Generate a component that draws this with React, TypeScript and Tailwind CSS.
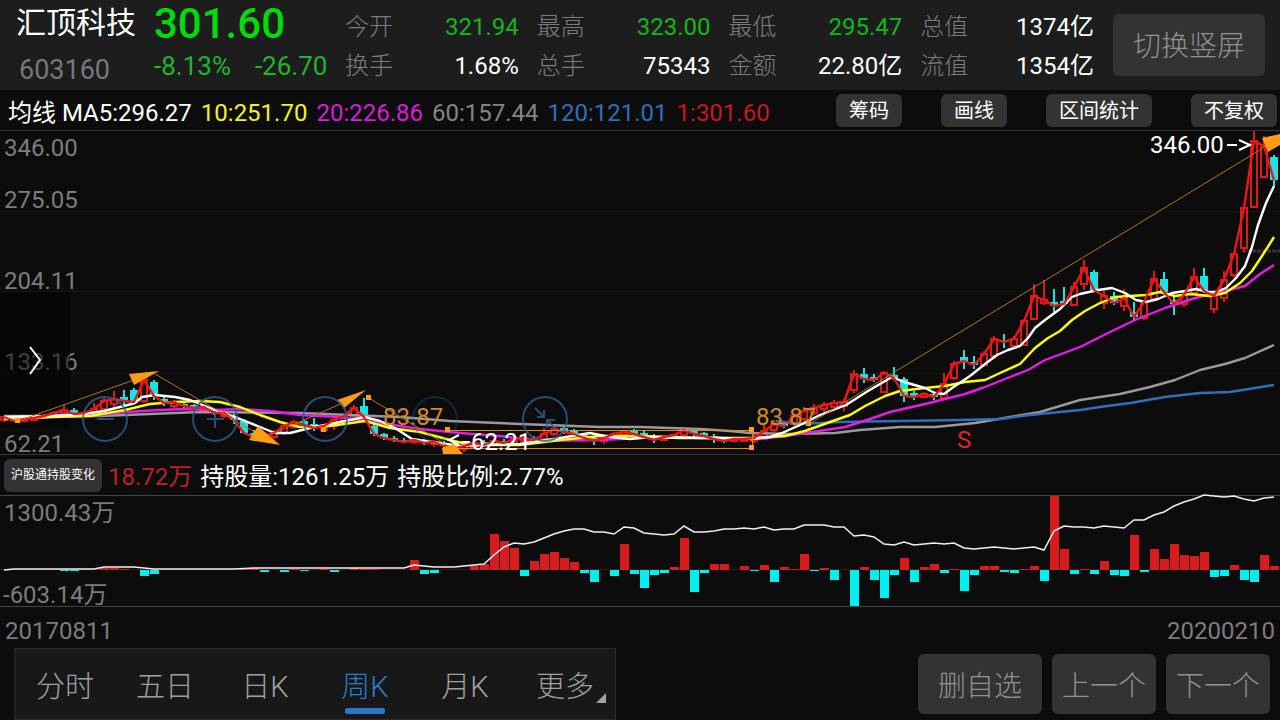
import clsx from 'clsx';

// [high, body top, body bottom, low, direction] for each week, in chart units
type Candle = [number, number, number, number, 'u' | 'd'];

const candles: Candle[] = [
  [416, 417, 420, 422, 'u'], [416, 418, 421, 422, 'd'], [417, 419, 421, 422, 'u'], [416, 418, 420, 421, 'u'],
  [414, 416, 418, 419, 'u'], [411, 413, 416, 417, 'u'], [405, 410, 413, 414, 'u'], [408, 410, 414, 416, 'd'],
  [411, 413, 415, 416, 'u'], [403, 409, 413, 414, 'u'], [398, 401, 409, 411, 'u'], [391, 399, 404, 408, 'u'],
  [390, 397, 401, 406, 'd'], [388, 390, 402, 404, 'd'], [373, 380, 401, 403, 'u'], [380, 382, 396, 400, 'd'],
  [396, 399, 403, 406, 'd'], [400, 402, 406, 408, 'u'], [402, 404, 406, 408, 'd'], [404, 405, 408, 410, 'd'],
  [405, 407, 411, 413, 'u'], [408, 410, 413, 415, 'd'], [411, 413, 416, 418, 'u'], [414, 416, 420, 424, 'd'],
  [419, 421, 433, 434, 'd'], [430, 433, 437, 441, 'd'], [434, 436, 439, 441, 'u'], [430, 433, 437, 439, 'u'],
  [423, 426, 433, 435, 'u'], [420, 422, 427, 429, 'u'], [419, 421, 425, 427, 'd'], [418, 424, 428, 431, 'd'],
  [424, 426, 430, 432, 'u'], [417, 420, 426, 430, 'u'], [414, 416, 421, 423, 'u'], [405, 408, 416, 418, 'u'],
  [398, 406, 417, 420, 'd'], [424, 426, 434, 436, 'd'], [433, 434, 438, 440, 'd'], [436, 438, 440, 442, 'd'],
  [438, 440, 442, 443, 'd'], [438, 440, 442, 444, 'u'], [439, 440, 443, 445, 'd'], [440, 442, 444, 447, 'u'],
  [441, 443, 446, 449, 'd'], [443, 446, 449, 451, 'd'], [443, 446, 449, 452, 'u'], [441, 443, 447, 449, 'u'],
  [440, 442, 445, 447, 'd'], [438, 441, 445, 446, 'u'], [439, 441, 443, 445, 'd'], [438, 439, 442, 444, 'u'],
  [437, 438, 441, 443, 'u'], [436, 438, 440, 441, 'd'], [428, 434, 439, 441, 'u'], [426, 429, 434, 436, 'u'],
  [426, 428, 432, 434, 'd'], [429, 431, 434, 436, 'd'], [433, 435, 438, 441, 'd'], [436, 438, 441, 445, 'd'],
  [436, 438, 441, 444, 'u'], [432, 434, 438, 440, 'u'], [430, 432, 435, 437, 'u'], [429, 431, 434, 436, 'd'],
  [431, 433, 437, 439, 'd'], [434, 436, 440, 443, 'd'], [436, 437, 440, 441, 'u'], [434, 435, 437, 439, 'u'],
  [428, 430, 435, 437, 'u'], [429, 431, 434, 438, 'd'], [432, 433, 436, 439, 'd'], [434, 436, 439, 443, 'd'],
  [437, 439, 441, 443, 'd'], [438, 439, 441, 442, 'u'], [437, 439, 441, 442, 'u'], [432, 438, 441, 443, 'u'],
  [425, 431, 439, 440, 'u'], [420, 424, 430, 432, 'u'], [421, 423, 426, 428, 'd'], [413, 416, 424, 426, 'u'],
  [407, 411, 419, 421, 'u'], [404, 408, 413, 415, 'u'], [402, 405, 409, 412, 'u'], [400, 403, 407, 409, 'u'],
  [399, 402, 406, 411, 'u'], [370, 374, 390, 393, 'u'], [368, 374, 379, 383, 'd'], [374, 377, 380, 382, 'd'],
  [371, 373, 392, 393, 'u'], [367, 375, 378, 380, 'd'], [377, 379, 396, 402, 'd'], [391, 393, 397, 400, 'd'],
  [392, 394, 397, 398, 'u'], [392, 394, 397, 400, 'd'], [373, 384, 398, 399, 'u'], [361, 364, 378, 380, 'u'],
  [350, 357, 361, 369, 'd'], [356, 362, 365, 369, 'd'], [351, 354, 365, 367, 'u'], [336, 339, 356, 359, 'u'],
  [334, 340, 342, 348, 'd'], [336, 339, 346, 348, 'u'], [319, 321, 345, 346, 'u'], [284, 296, 319, 320, 'u'],
  [280, 300, 303, 305, 'u'], [289, 302, 306, 313, 'd'], [287, 301, 304, 306, 'd'], [282, 287, 305, 306, 'u'],
  [260, 268, 284, 290, 'u'], [270, 272, 290, 292, 'd'], [291, 296, 303, 309, 'u'], [292, 296, 303, 305, 'd'],
  [289, 298, 306, 311, 'u'], [302, 312, 317, 320, 'd'], [300, 302, 318, 320, 'u'], [271, 279, 299, 301, 'u'],
  [272, 279, 292, 294, 'd'], [296, 300, 304, 315, 'd'], [291, 295, 304, 307, 'u'], [268, 277, 293, 295, 'u'],
  [268, 276, 291, 293, 'd'], [292, 296, 309, 313, 'u'], [271, 280, 298, 302, 'u'], [252, 254, 275, 278, 'u'],
  [207, 208, 248, 252, 'u'], [131, 141, 207, 208, 'u'], [136, 146, 177, 178, 'u'], [155, 157, 180, 187, 'd'],
];

const closes = candles.map((c, i) => `${i * 10 + 4},${c[4] === 'u' ? c[1] : c[2]}`).join(' ');

const averages = [
  {
    color: '#9a9a9a',
    points: '4,416 100,416 200,412 300,413 400,417 450,421 520,424 600,427 640,427 700,429 730,431 750,433 790,434 835,433 860,430 900,427 935,427 975,423 1010,417 1040,412 1080,400 1120,394 1150,387 1175,380 1200,370 1225,364 1245,358 1274,345',
  },
  {
    color: '#2f6fbf',
    points: '776,421 800,424 840,422 900,421 960,420 1000,419 1030,415 1080,410 1100,407 1130,403 1165,397 1200,393 1230,392 1274,385',
  },
  {
    color: '#e81ae8',
    points: '4,418 60,417 100,415 125,412 160,410 185,409 215,410 240,409 270,411 300,415 340,417 380,423 420,429 460,433 500,436 540,441 600,440 660,437 720,438 760,439 785,436 812,432 845,427 870,419 890,412 925,404 965,394 985,387 1010,377 1028,370 1045,360 1080,347 1110,332 1135,320 1165,308 1195,298 1225,291 1245,286 1260,274 1274,265',
  },
  {
    color: '#ffff00',
    points: '4,419 50,417 90,416 125,410 150,404 175,402 200,401 220,402 240,407 260,415 280,422 300,427 330,426 365,421 390,428 420,432 450,440 470,445 520,445 560,440 600,436 640,436 700,438 750,438 785,436 805,431 830,422 850,415 865,406 885,396 900,391 925,388 945,386 965,382 985,380 1000,373 1020,364 1035,348 1048,338 1060,331 1072,320 1085,311 1100,303 1115,297 1130,296 1146,295 1160,292 1175,296 1190,294 1210,296 1225,293 1240,283 1252,271 1262,256 1274,237',
  },
  {
    color: '#ffffff',
    points: '4,417 50,416 84,414 104,411 124,406 135,403 142,397 155,395 175,397 190,400 205,406 220,412 240,419 260,427 275,433 290,433 310,428 330,424 355,419 364,417 380,421 395,428 412,439 425,441 440,443 460,446 480,445 520,444 560,438 590,433 610,437 630,439 650,437 680,438 720,438 752,439 770,437 782,433 800,425 820,415 846,405 868,391 892,377 904,382 925,388 935,393 944,394 952,388 970,376 985,364 997,355 1008,350 1020,346 1028,338 1035,328 1045,320 1060,309 1072,297 1080,294 1098,290 1112,288 1125,293 1136,300 1146,302 1158,299 1172,293 1185,291 1196,289 1208,292 1216,292 1226,288 1236,278 1245,266 1252,247 1258,225 1266,203 1274,186',
  },
];

const anchors = [[18, 421], [324, 430], [369, 398], [448, 430], [752, 430], [752, 448], [809, 424]];

// Weekly change in holding, index 0 is the leftmost week
const flows = [
  0, 0, 0, 0, 0, 0, -1, -1, 0, 0, 2, 2, 1, 0, -6, -4, 0, 0, 0, 0, 0, 0, 0, 0, 2, 2, -2, 0, -2, 1, -1, 0,
  1, -2, 0, 2, 1, 1, 0, 0, 0, 10, -4, -3, 0, 0, 0, 4, 6, 36, 29, 22, -6, 9, 16, 18, 12, 8, -3, -12, 0, -6, 26, -4,
  -18, -5, -3, 3, 32, -22, -3, 6, 6, 0, 4, -1, 5, -12, 3, 1, 16, -1, 2, -10, 0, -36, 3, -10, -28, -5, 12, -12, 3, 6, -3, 1,
  -21, -5, 4, 4, -2, -3, 1, 4, -11, 74, 21, -4, 1, -4, 9, -5, -6, 35, -2, 21, 11, 26, 15, 14, 18, -7, -6, 5, -10, -12, 15, 4,
];

const holding =
  '4,570 14,569 94,569 104,567 134,567 154,569 234,569 254,568 404,568 414,565 424,566 434,567 454,567 484,564 494,555 504,547 514,543 524,544 534,542 544,538 554,534 564,531 574,529 584,529 594,532 604,532 614,534 624,527 634,528 644,533 654,534 664,535 674,534 684,526 694,532 704,532 714,531 724,529 734,529 744,528 754,529 764,527 774,530 784,529 794,529 804,525 824,525 834,527 844,527 854,536 864,535 874,537 884,544 894,545 904,542 914,545 934,543 944,544 954,543 964,548 974,549 994,547 1014,549 1034,547 1044,550 1054,531 1064,526 1074,527 1084,527 1094,528 1104,526 1114,527 1124,528 1134,520 1144,520 1154,515 1164,512 1174,506 1184,502 1194,499 1204,495 1214,496 1224,497 1234,496 1244,499 1254,501 1264,498 1274,497';

const stats = [
  { label: '今开', value: '321.94', down: true },
  { label: '最高', value: '323.00', down: true },
  { label: '最低', value: '295.47', down: true },
  { label: '总值', value: '1374亿' },
  { label: '换手', value: '1.68%' },
  { label: '总手', value: '75343' },
  { label: '金额', value: '22.80亿' },
  { label: '流值', value: '1354亿' },
];

const legend = [
  { text: '均线 MA5:296.27', color: 'text-white' },
  { text: '10:251.70', color: 'text-[#f2f21c]' },
  { text: '20:226.86', color: 'text-[#d81cd8]' },
  { text: '60:157.44', color: 'text-[#858585]' },
  { text: '120:121.01', color: 'text-[#2f6fb8]' },
  { text: '1:301.60', color: 'text-[#c81818]' },
];

const tabs = ['分时', '五日', '日K', '周K', '月K', '更多'];

const tools = [
  { label: '缩小', icon: <path d="M15 23h17" /> },
  { label: '放大', icon: <path d="M15 23h17M23 15v17" /> },
  { label: '左移', icon: null },
  { label: '右移', icon: null, dim: true },
  { label: '收起', icon: <path d="M13 12l9 9M22 14v7h-7M34 33l-9-9M25 32v-8h8" /> },
];

function Header() {
  return (
    <header className="flex h-[90px] items-center bg-[#1d1d1d] pr-[15px]">
      <div className="grid w-[345px] shrink-0 grid-cols-[138px_1fr] pl-4">
        <h1 className="text-[30px] leading-[44px]">汇顶科技</h1>
        <div className="pt-px text-[42px] leading-[44px] font-medium text-[#00dc0a]">301.60</div>
        <div className="pt-1 pl-[3px] text-[27px] leading-10 text-[#77777c]">603160</div>
        <div className="flex gap-6 pt-1 text-[26px] leading-8 text-[#1fb52a]">
          <span>-8.13%</span>
          <span>-26.70</span>
        </div>
      </div>
      <dl className="grid flex-1 grid-cols-4 gap-x-[18px] pt-[3px] text-[24px] leading-[39px]">
        {stats.map((s) => (
          <div key={s.label} className="flex justify-between">
            <dt className="font-light text-[#7c7c82]">{s.label}</dt>
            <dd className={s.down ? 'text-[#10b81a]' : 'text-white'}>{s.value}</dd>
          </div>
        ))}
      </dl>
      <button className="ml-[19px] h-[62px] w-[152px] rounded-md bg-[#333] pt-1 text-[28px] font-light text-[#929292]">切换竖屏</button>
    </header>
  );
}

function PriceChart() {
  return (
    <section className="relative border-y border-[#363636]">
      <svg viewBox="0 131 1280 323" className="block w-full overflow-visible text-[24px]">
        {[211, 291, 373].map((y) => (
          <path key={y} d={`M0 ${y}.500H1280`} stroke="#191919" strokeDasharray="3 1" />
        ))}
        <g fill="#7c7c7c">
          <text x="4" y="156">346.00</text>
          <text x="4" y="208">275.05</text>
          <text x="4" y="289">204.11</text>
          <text x="4" y="370">133.16</text>
          <text x="4" y="452">62.21</text>
        </g>
        <path d="M1242 251h38" stroke="#333" strokeWidth="3" strokeDasharray="4 1" />
        <rect x="0" y="292" width="70" height="136" fill="#000" opacity="0.5" />

        {candles.map(([high, top, bottom, low, dir], i) => {
          const x = i * 10 + 4;
          return dir === 'u' ? (
            <g key={i} stroke="#e01818" strokeWidth="2" fill="none">
              <path d={`M${x} ${high}V${top}M${x} ${bottom}V${low}`} />
              <rect x={x - 3} y={top} width="6" height={bottom - top} />
            </g>
          ) : (
            <g key={i} fill="#14e6e6">
              <rect x={x - 1} y={high} width="2" height={low - high} />
              <rect x={x - 4} y={top} width="8" height={bottom - top} />
            </g>
          );
        })}

        <g fill="none" strokeWidth="2.4" strokeLinejoin="round">
          {averages.map((a) => (
            <polyline key={a.color} points={a.points} stroke={a.color} />
          ))}
          <polyline points={closes} stroke="#f01414" />
        </g>

        <g stroke="#b87414" strokeWidth="1" fill="none">
          <path d="M18 421L134 380M155 374L258 434M270 435L345 402M369 398L455 450M809 424L1268 145" />
          <path d="M448 430.500H752.500V448.500H455" stroke="#e08a14" />
        </g>
        <g fill="#ff9c14">
          <path d="M129 374l30-3-25 14zM337 400l29-10-22 18zM258 426l22 19-31-5zM442 448l12-4 9 10h-20zM1262 138l18-4v11l-12 7z" />
          {anchors.map(([x, y]) => (
            <rect key={`${x}-${y}`} x={x - 3} y={y - 3} width="5" height="5" />
          ))}
          <text x="383" y="425" fill="#d08a28">83.87</text>
          <text x="756" y="425" fill="#d08a28">83.87</text>
        </g>
        <g fill="#fff">
          <text x="1150" y="153">346.00</text>
          <text x="471" y="450">62.21</text>
        </g>
        <g stroke="#fff" strokeWidth="2" fill="none">
          <path d="M1227 145h10M1239 140l11 5-11 5" />
          <path d="M459 435l-10 5 10 5M461 442h9" />
          <path d="M30 347l10 13-10 14" />
        </g>
        <text x="957" y="448" fill="#e02424">S</text>
      </svg>
      <div className="absolute bottom-[12px] left-[82px] flex gap-16">
        {tools.map((t) => (
          <button key={t.label} aria-label={t.label} className={clsx('size-[46px]', t.dim ? 'opacity-30' : 'opacity-80')}>
            <svg viewBox="0 0 46 46" fill="none" stroke="#2f5f92" strokeWidth="2">
              <circle cx="23" cy="23" r="22" />
              {t.icon}
            </svg>
          </button>
        ))}
      </div>
    </section>
  );
}

function HoldingChart() {
  return (
    <section className="border-y border-[#444]">
      <svg viewBox="0 496 1280 110" className="block w-full overflow-visible text-[24px]">
        <g fill="#7c7c7c">
          <text x="4" y="521">1300.43万</text>
          <text x="3" y="603">-603.14万</text>
        </g>
        <path d="M0 569.500H1280" stroke="#4a1414" />
        {flows.map((v, i) => (
          <rect
            key={i}
            x={i * 10}
            y={v > 0 ? 570 - v : 570}
            width="9"
            height={Math.abs(v)}
            fill={v > 0 ? '#d81c1e' : '#00f0f0'}
          />
        ))}
        <polyline points={holding} fill="none" stroke="#f0f0f0" strokeWidth="1.500" />
      </svg>
    </section>
  );
}

export default function App() {
  return (
    <main className="min-h-screen bg-[#0c0c0c] font-['Roboto','Noto_Sans_CJK_SC',sans-serif] text-white">
      <Header />

      <div className="flex h-10 items-center justify-between pr-[3px] pl-2">
        <div className="flex gap-[9px] pt-[6px] text-[24px] leading-8 whitespace-nowrap">
          {legend.map((l) => (
            <span key={l.text} className={l.color}>{l.text}</span>
          ))}
        </div>
        <div className="flex gap-[39px] text-[20px]">
          {['筹码', '画线', '区间统计', '不复权'].map((name) => (
            <button key={name} className="h-[33px] rounded-md bg-[#333] px-[13px] pt-px leading-8">{name}</button>
          ))}
        </div>
      </div>

      <PriceChart />

      <div className="flex h-10 items-center gap-[6px] pl-1 text-[24px] leading-8">
        <button className="h-[33px] w-[98px] rounded-md bg-[#333] text-[12px]">沪股通持股变化</button>
        <div className="flex gap-2 pt-[3px]">
          <span className="text-[#c02024]">18.72万</span>
          <span>持股量:1261.25万</span>
          <span>持股比例:2.77%</span>
        </div>
      </div>

      <HoldingChart />

      <div className="flex h-[41px] items-center justify-between px-[5px] pt-[6px] text-[24px] text-[#7c7c7c]">
        <span>20170811</span>
        <span>20200210</span>
      </div>

      <footer className="flex items-start justify-between pr-[10px] pl-[14px]">
        <nav className="flex h-[72px] border border-[#2c2c2c] bg-[#181818]">
          {tabs.map((name) => (
            <button
              key={name}
              className={clsx(
                'relative w-[100px] pt-2 text-[29px] font-light',
                name === '周K' ? 'text-[#2c7cc8]' : 'text-[#a0a0a0]',
              )}
            >
              {name}
              {name === '周K' && <span className="absolute bottom-[5px] left-[30px] h-[6px] w-10 rounded-xs bg-[#2478c4]" />}
              {name === '更多' && (
                <svg viewBox="0 0 10 10" className="absolute right-[9px] bottom-[16px] size-[10px]">
                  <path d="M10 0v10H0z" fill="#a0a0a0" />
                </svg>
              )}
            </button>
          ))}
        </nav>
        <div className="flex gap-[10px] pt-[6px] text-[28px] font-light text-[#929292]">
          <button className="h-[60px] w-[124px] rounded-md bg-[#333] pt-[6px]">删自选</button>
          <button className="h-[60px] w-[104px] rounded-md bg-[#333] pt-[6px]">上一个</button>
          <button className="h-[60px] w-[104px] rounded-md bg-[#333] pt-[6px]">下一个</button>
        </div>
      </footer>
    </main>
  );
}
